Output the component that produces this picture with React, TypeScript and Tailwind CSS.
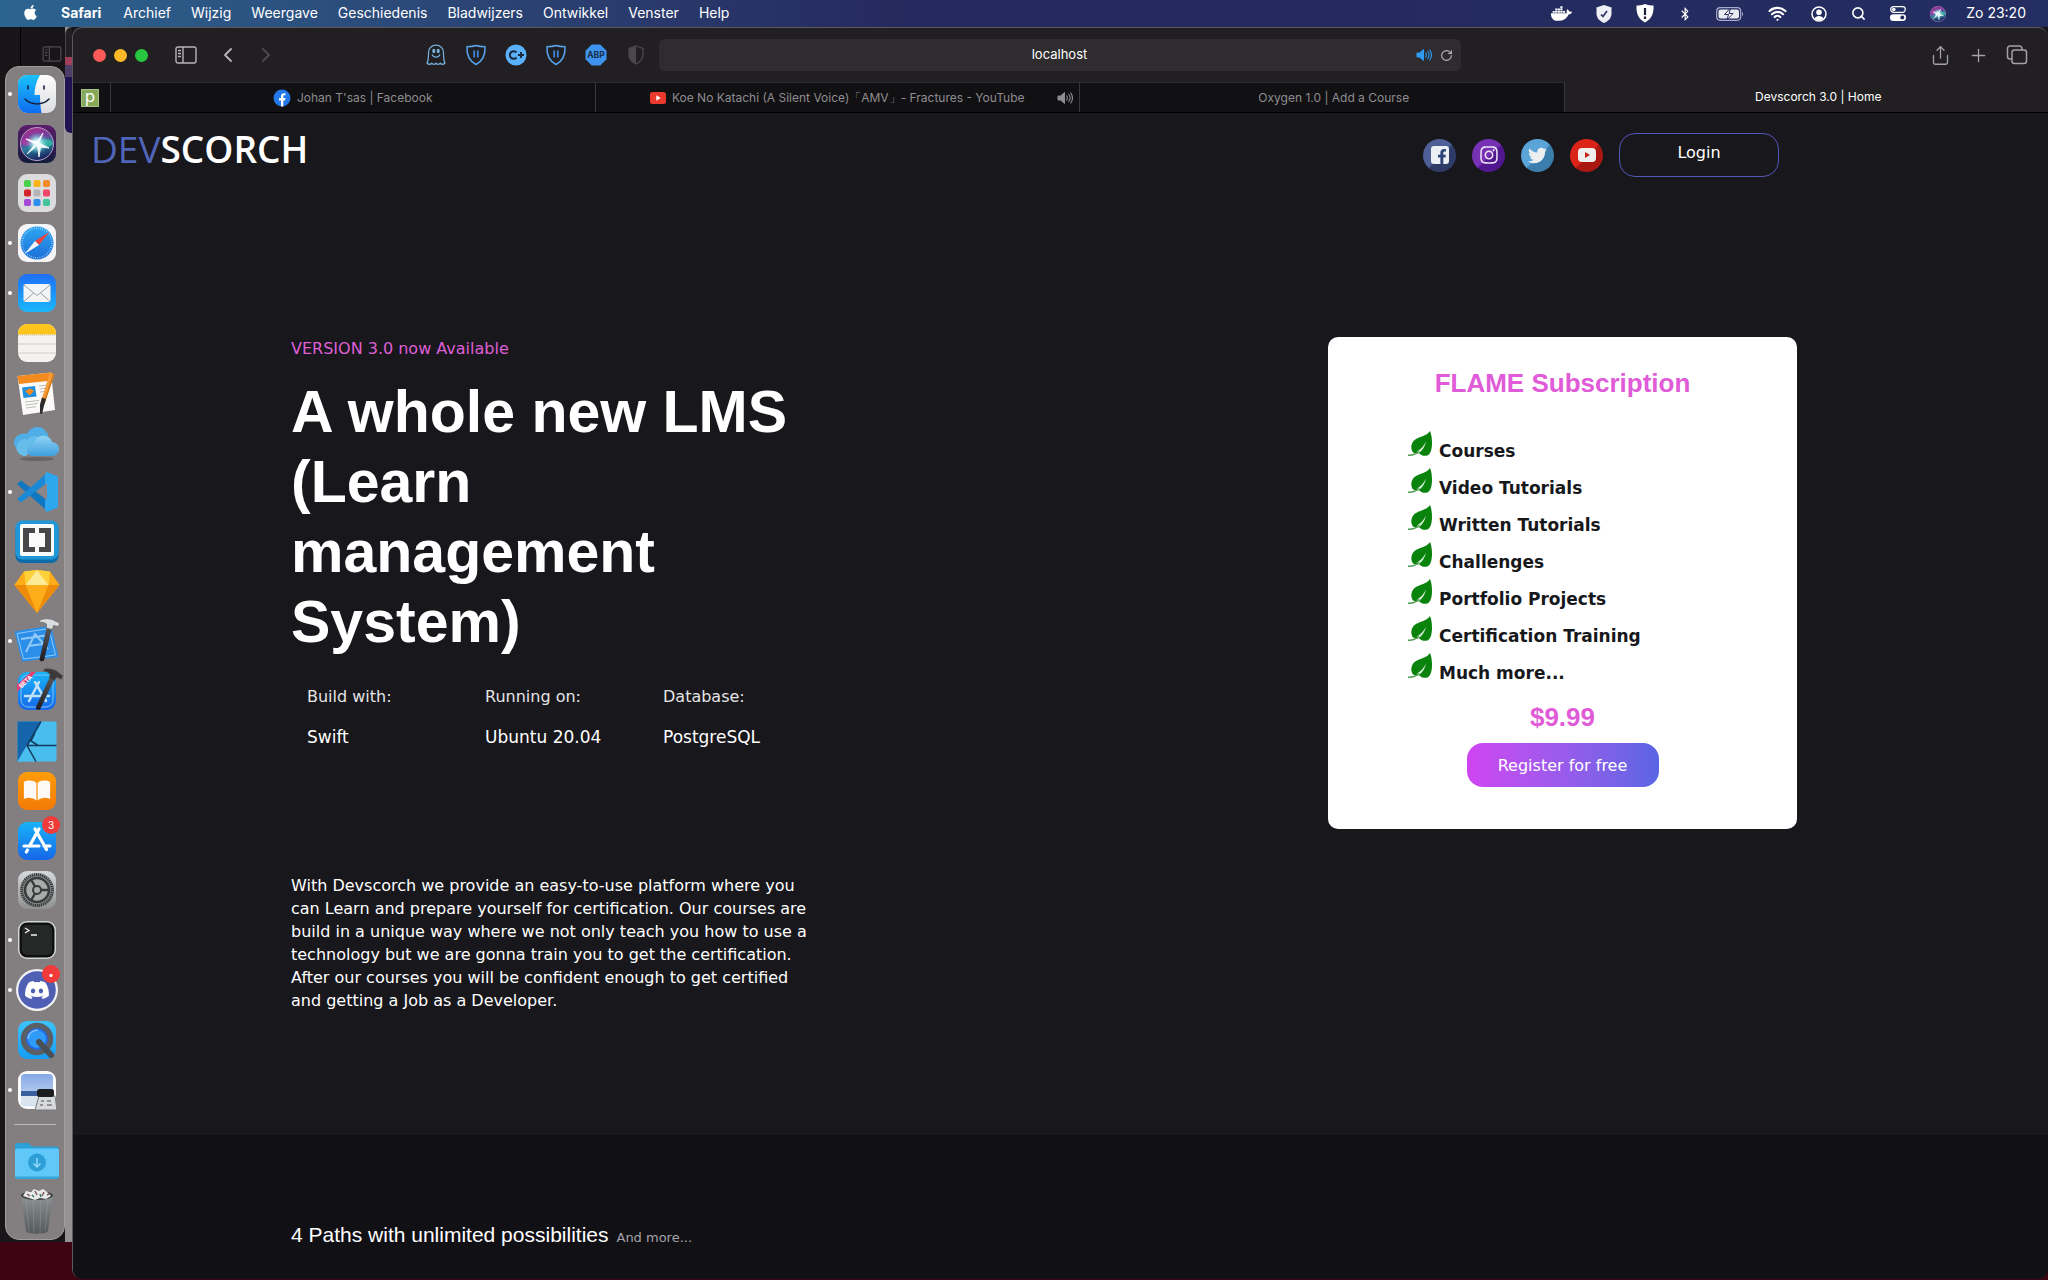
import React from "react";
import { FaApple, FaDocker, FaBluetoothB, FaFacebookF, FaTwitter, FaInstagram, FaDiscord } from "react-icons/fa";
import { Wifi, Search, ChevronLeft, ChevronRight, Plus, Share, RotateCw } from "lucide-react";

const SANS = "font-['Inter',sans-serif]";
const BODY = "font-['DejaVu_Sans',sans-serif]";
const HEAD = "font-['Liberation_Sans',sans-serif]";

/* ---------- Dock icons ---------- */

function Icon({ children }: { children: React.ReactNode }) {
  return (
    <svg viewBox="0 0 48 48" className="size-12 shrink-0 overflow-visible" aria-hidden="true">
      {children}
    </svg>
  );
}

function Gradients() {
  const defs: [string, string, string][] = [
    ["gBlue", "#19c3fb", "#0f6bf0"],
    ["gDial", "#2fa6f2", "#1b6fd8"],
    ["gMail", "#1f6ff5", "#1bb7fa"],
    ["gStore", "#17b3f8", "#1767e8"],
    ["gGrey", "#d5d9db", "#8f9190"],
    ["gOrange", "#ff9d0a", "#f47a06"],
    ["gCloud", "#8fd3f6", "#3f9fdc"],
    ["gLight", "#fdfdfd", "#dcdde0"],
    ["gSky", "#86a8e6", "#cfe0f5"],
    ["gQt", "#3ec4fb", "#149cf5"],
    ["gTrash", "#8d9395", "#54595b"],
    ["gSiri", "#5b1d6b", "#111b3c"],
    ["gHammer", "#5a5a5c", "#1c1c1e"],
  ];
  return (
    <svg className="absolute size-0" aria-hidden="true">
      <defs>
        {defs.map(([id, a, b]) => (
          <linearGradient key={id} id={id} x1="0" y1="0" x2="0" y2="1">
            <stop offset="0" stopColor={a} />
            <stop offset="1" stopColor={b} />
          </linearGradient>
        ))}
        <linearGradient id="gOrb" x1="0" y1="0" x2=".3" y2="1">
          <stop offset="0" stopColor="#b32f86" />
          <stop offset=".4" stopColor="#7a3a9c" />
          <stop offset=".65" stopColor="#2c7f9c" />
          <stop offset="1" stopColor="#1d2f66" />
        </linearGradient>
        <radialGradient id="gGlow">
          <stop offset="0" stopColor="#ffffff" />
          <stop offset=".35" stopColor="#b8f4f2" stopOpacity=".9" />
          <stop offset="1" stopColor="#4fc9d0" stopOpacity="0" />
        </radialGradient>
      </defs>
    </svg>
  );
}

const Tile = ({ fill }: { fill: string }) => <rect x="5" y="5" width="38" height="38" rx="9" fill={fill} />;

const Finder = () => (
  <Icon>
    <Tile fill="url(#gLight)" />
    <path d="M14 5h13c-4 7-5.500 13-5.500 20h5.500c0 7 .5 12 1.500 18H14a9 9 0 0 1-9-9V14a9 9 0 0 1 9-9z" fill="url(#gBlue)" />
    <path d="M15 16v3M31 16v3" stroke="#16203a" strokeWidth="1.600" strokeLinecap="round" />
    <path d="M12 29c6 6.500 18 6.500 24 0" stroke="#16203a" strokeWidth="1.500" fill="none" strokeLinecap="round" />
  </Icon>
);

const SiriOrb = () => (
  <>
    <circle cx="24" cy="24" r="16.500" fill="url(#gOrb)" stroke="#b79ac6" strokeWidth="1" />
    <path d="M24 23C16 14 9 17 8 24c5 3 11 2 16-1z" fill="#c13ba8" opacity=".6" />
    <path d="M24 23c6-5 14-5 16 1-5 5-12 4-16-1z" fill="#37c9a6" opacity=".7" />
    <circle cx="24" cy="23" r="11" fill="url(#gGlow)" />
    <path d="M24 22l-10 12 7.500-6zM24 22l2 15 1.500-10zM24 22l12 6-9-1zM24 22l6-9-3.500 8zM24 22l-11-3 8 4.500z" fill="#fff" stroke="#fff" strokeWidth="1" strokeLinejoin="round" opacity=".9" />
  </>
);

const Siri = () => (
  <Icon>
    <Tile fill="url(#gSiri)" />
    <SiriOrb />
  </Icon>
);

const Launchpad = () => {
  const colors = ["#4bd04c", "#f7b51b", "#f38b2b", "#d0252b", "#b5b5b7", "#f0486b", "#a64bd6", "#2b8ff0", "#43c59b"];
  return (
    <Icon>
      <Tile fill="#dcdbdd" />
      {colors.map((c, i) => (
        <rect key={c} x={11 + (i % 3) * 9.500} y={11 + Math.floor(i / 3) * 9.500} width="7" height="7" rx="1.800" fill={c} />
      ))}
    </Icon>
  );
};

const SafariIcon = () => (
  <Icon>
    <Tile fill="#f5f5f7" />
    <circle cx="24" cy="24" r="16.500" fill="url(#gDial)" />
    <circle cx="24" cy="24" r="14.800" fill="none" stroke="#cfe8fb" strokeWidth="1.500" strokeDasharray=".6 1.600" />
    <path d="M36.500 13L26 26 22 22z" fill="#f0433c" />
    <path d="M11.500 35L22 22l4 4z" fill="#f4f6f8" />
  </Icon>
);

const Mail = () => (
  <Icon>
    <Tile fill="url(#gMail)" />
    <rect x="10.500" y="15" width="27" height="18" rx="2" fill="#f3f4f5" />
    <path d="M11 16l11.500 9.500c1 .8 2 .8 3 0L37 16M11 32.500l9.500-8.500M37 32.500L27.500 24" fill="none" stroke="#9c9fa3" strokeWidth="1" />
  </Icon>
);

const Notes = () => (
  <Icon>
    <Tile fill="#f4f3f0" />
    <path d="M14 5h20a9 9 0 0 1 9 9v1.500H5V14a9 9 0 0 1 9-9z" fill="#fcc41d" />
    <path d="M5 16h38" stroke="#c9b98a" strokeWidth="1" strokeDasharray="1 1" />
    <path d="M5 25h38M5 34h38" stroke="#cfcec9" strokeWidth="1" />
  </Icon>
);

const Pages = () => (
  <Icon>
    <path d="M4.500 7L38 3.500 42 41 10 46z" fill="#fbfaf8" />
    <path d="M4.500 7L38 3.500l1 8L6 15z" fill="#f28a1f" />
    <path d="M9 18.500l13-1.500 1.500 10.500-13 1.500z" fill="#1f8fe0" />
    <path d="M12 22l5-2.500 4 2-4 5z" fill="#f28a1f" />
    <path d="M26 17l7-.8M26.500 20l6-.8M27 23l5-.6M12 33l14-1.500M12.500 36l12-1.500M13 39l10-1.300" stroke="#b9b9b9" strokeWidth="1" />
    <path d="M37 3.500l4.500 1.800L31.500 35l-4-1.500z" fill="#f6a03a" />
    <path d="M40 4.500l1.500.8L31.500 35l-1.500-.6z" fill="#d6791a" />
    <path d="M29 28.500l4 1.500-1.800 6-2.200 9-2-.6 0-9z" fill="#2b2b2d" />
  </Icon>
);

const Cloud = () => (
  <Icon>
    <ellipse cx="24" cy="41" rx="17" ry="2" fill="#000" opacity=".2" />
    <path d="M10 33a8.500 8.500 0 0 1-1-17c3-1 5 0 5 0C17 8 30 6 33 14c3 2 3 6 0 10z" fill="#4faee5" />
    <path d="M13 38C3 38 0 27 8 22c4-2 7 0 7 0 2-6 12-5 13 1z" fill="#66bdec" />
    <path d="M19 38c-6-1-7-11 2-12 2-11 16-10 18-2 10 1 9 14 0 14z" fill="url(#gCloud)" />
  </Icon>
);

const VsCode = () => (
  <Icon>
    <path d="M4 16l4-3.500 25 19V42z" fill="#0f76c0" />
    <path d="M4 31l4 3.500L34 15V5z" fill="#1a8ad6" />
    <path d="M34 4l11 4.500v31L34 44l-2-2V6z" fill="#2fa7ee" />
    <path d="M34 15v17l-10.500-8.500z" fill="#8b8687" />
  </Icon>
);

const Brackets = () => (
  <Icon>
    <rect x="2.500" y="4" width="43" height="41" rx="7" fill="#0f6ba8" />
    <rect x="2.500" y="2.500" width="43" height="39" rx="7" fill="#1f97d8" />
    <rect x="7" y="6" width="34" height="32" rx="2" fill="#fafafa" />
    <path d="M10 10h12v5h-6v14h6v5H10zM38 10H26v5h6v14h-6v5h12z" fill="#48484a" />
    <path d="M17 16h14v12H17z" fill="#fafafa" />
  </Icon>
);

const Sketch = () => (
  <Icon>
    <path d="M11 3.500L24 2l13 1.500L46.500 17 24 45 1.500 17z" fill="#fdad1a" />
    <path d="M11 3.500L24 2 12.500 17z" fill="#fdd13a" />
    <path d="M37 3.500L24 2l11.500 15z" fill="#fdd13a" />
    <path d="M24 2l11.500 15h-23z" fill="#fdea96" />
    <path d="M1.500 17h11L24 45z" fill="#ee8b0b" />
    <path d="M46.500 17h-11L24 45z" fill="#ee8b0b" />
    <path d="M1.500 17L11 3.500 12.500 17z" fill="#fdad1a" />
  </Icon>
);

const Hammer = ({ head }: { head: string }) => (
  <g>
    <path d="M34 9l5 1.500L31 43.500c-2 1.500-4 .8-4.500-1z" fill="url(#gHammer)" />
    <path d="M27 3c5-2 12-1.500 15 1l4.500 2-1 3.500-5-1-1.500 4-5.500-1.500 0-4c-3-2-5-2-7-1.500z" fill={head} stroke="#555" strokeWidth=".5" />
  </g>
);

const Xcode = () => (
  <Icon>
    <path d="M1.500 14.500L38 8.500 45.500 40 9 44.500z" fill="#2b8ee8" />
    <path d="M4 16.500l32-5 6.500 26.500-32 4z" fill="none" stroke="#8cc8f8" strokeWidth="1" />
    <path d="M13 35l9-18 13 15M15 29l15-2M8 22l28-4" stroke="#a9d8fb" strokeWidth="2" fill="none" opacity=".8" />
    <Hammer head="#d9dcde" />
  </Icon>
);

const XcodeBeta = () => (
  <Icon>
    <Tile fill="url(#gStore)" />
    <rect x="8" y="8" width="32" height="32" rx="7" fill="none" stroke="#7cc2f8" strokeWidth="1" />
    <path d="M16 34l10-19M22 15l11 19M12 29h24" stroke="#bfe2fb" strokeWidth="2.500" fill="none" strokeLinecap="round" />
    <path d="M4 18L18 5h5L4 25z" fill="#e83f6f" />
    <text x="13" y="16.500" fontSize="6" fontWeight="700" fill="#fff" textAnchor="middle" fontFamily="Inter, sans-serif" transform="rotate(-45 13 15)">
      BETA
    </text>
    <g transform="rotate(12 34 24)">
      <Hammer head="#3a3a3c" />
    </g>
  </Icon>
);

const Affinity = () => (
  <Icon>
    <rect x="4.500" y="4.500" width="39" height="40" rx="1" fill="#49bdee" />
    <path d="M4.500 4.500H28L4.500 44.500z" fill="#1565ad" />
    <path d="M28 4.500L4.500 44.500V44.500H22L14 28.500z" fill="#49bdee" />
    <path d="M28 4.500L14 28.500l9 16M14 28.500h29.500M22 16l-4 8 7 4.500" stroke="#123a5e" strokeWidth="1.500" fill="none" />
  </Icon>
);

const Books = () => (
  <Icon>
    <Tile fill="url(#gOrange)" />
    <path d="M23.400 16c-3-3-9-3-12.500-1v17c4-2 9-1.500 12.500 1.500zM24.600 16c3-3 9-3 12.500-1v17c-4-2-9-1.500-12.500 1.500z" fill="#fdf9f4" />
  </Icon>
);

const AppStore = () => (
  <Icon>
    <Tile fill="url(#gStore)" />
    <path d="M26 12L16.500 29M22 12l11.500 20.500M11 29h15M31 29h6M14.500 33l-1.200 2" stroke="#fff" strokeWidth="3.200" strokeLinecap="round" fill="none" />
  </Icon>
);

const Settings = () => (
  <Icon>
    <Tile fill="url(#gGrey)" />
    <circle cx="24" cy="24" r="15.500" fill="#8c8e8e" stroke="#3d3e40" strokeWidth="3" strokeDasharray="1.500 .6" />
    <circle cx="24" cy="24" r="12" fill="#a9abab" stroke="#3a3b3d" strokeWidth="2.500" />
    <circle cx="24" cy="24" r="4" fill="none" stroke="#3a3b3d" strokeWidth="2" />
    <path d="M28 24h8M22 20.500l-4-7M22 27.500l-4 7" stroke="#3a3b3d" strokeWidth="2.500" />
  </Icon>
);

const Terminal = () => (
  <Icon>
    <Tile fill="#d3d6d6" />
    <rect x="6.500" y="6.500" width="35" height="35" rx="7.500" fill="#0f1010" />
    <rect x="9" y="9" width="30" height="30" rx="5" fill="#262727" />
    <path d="M12 12l4 2.500-4 2.500M18 19h6" stroke="#eee" strokeWidth="1.300" fill="none" />
  </Icon>
);

const Discord = () => (
  <Icon>
    <circle cx="24" cy="24" r="21" fill="#f3f3f6" />
    <circle cx="24" cy="24" r="18.800" fill="#4f60b4" />
    <FaDiscord x="11" y="11" size={26} color="#fff" />
  </Icon>
);

const QuickTime = () => (
  <Icon>
    <Tile fill="url(#gQt)" />
    <circle cx="24" cy="23" r="13.500" fill="#1e6bf0" stroke="#5a5f66" strokeWidth="5.500" />
    <circle cx="24" cy="23" r="9" fill="#2e9bf8" />
    <path d="M26 26l12 13" stroke="#4b5057" strokeWidth="6" strokeLinecap="round" />
    <path d="M15 23c0-6 5-9 10-9" stroke="#bfe4fd" strokeWidth="1.500" fill="none" opacity=".6" />
  </Icon>
);

const Preview = () => (
  <Icon>
    <Tile fill="#fafafa" />
    <rect x="8" y="8" width="32" height="32" rx="4" fill="url(#gSky)" />
    <path d="M8 25h32v5H8z" fill="#39609c" />
    <path d="M8 30h32v5a4 4 0 0 1-4 4H12a4 4 0 0 1-4-4z" fill="#d9e4ee" />
    <path d="M26 30h16l2 14H22z" fill="#d8d9da" stroke="#77797b" strokeWidth="1" />
    <rect x="24" y="23" width="17" height="8" rx="2.500" fill="#1c1d1f" />
    <path d="M28 35h3M34 35h4M27 39h3M34 39h5" stroke="#4b4d4f" strokeWidth="1" />
  </Icon>
);

const Downloads = () => (
  <Icon>
    <path d="M2 8c0-2 1-3 3-3h10c2 0 2.500 3.500 5 3.500h23c2 0 3 1 3 3V20H2z" fill="#2da0d8" />
    <rect x="2" y="10.500" width="44" height="30" rx="2.500" fill="#5fc8f8" />
    <path d="M2 38.500h44a2.500 2.500 0 0 1-2.500 2.500h-39A2.500 2.500 0 0 1 2 38.500z" fill="#35a5db" />
    <circle cx="24" cy="24.500" r="9" fill="#2d9ed6" />
    <path d="M24 20v9M20.500 25.500L24 29l3.500-3.500" stroke="#8fdcfc" strokeWidth="1.500" fill="none" />
  </Icon>
);

const Trash = () => (
  <Icon>
    <path d="M8 7h32l-5 36c-1 3.500-21 3.500-22 0z" fill="url(#gTrash)" />
    <path d="M13 11l3 32M20 12l1 33M28 12l-1 33M35 11l-3 32" stroke="#a9aeb0" strokeWidth=".8" opacity=".4" />
    <ellipse cx="24" cy="7.500" rx="16" ry="4.500" fill="#3e4243" />
    <path d="M10 8l3-5 5 1 3-3 5 2 4-2 4 3 4 4-5 3-6-1-5 2-6-2z" fill="#e9e9ea" />
    <path d="M14 6l3 2M22 3l2 4M31 4l-2 4M34 7l2-1" stroke="#7a5550" strokeWidth="1.500" />
    <path d="M19 7l2 2M27 6l1 3" stroke="#367b68" strokeWidth="1.500" />
  </Icon>
);

type DockEntry = { name: string; icon: React.ReactNode; open?: boolean; badge?: string };

const dockApps: DockEntry[] = [
  { name: "Finder", icon: <Finder />, open: true },
  { name: "Siri", icon: <Siri /> },
  { name: "Launchpad", icon: <Launchpad /> },
  { name: "Safari", icon: <SafariIcon />, open: true },
  { name: "Mail", icon: <Mail />, open: true },
  { name: "Notes", icon: <Notes /> },
  { name: "Pages", icon: <Pages /> },
  { name: "Cloud", icon: <Cloud /> },
  { name: "Visual Studio Code", icon: <VsCode />, open: true },
  { name: "Brackets", icon: <Brackets /> },
  { name: "Sketch", icon: <Sketch /> },
  { name: "Xcode", icon: <Xcode />, open: true },
  { name: "Xcode beta", icon: <XcodeBeta /> },
  { name: "Affinity Designer", icon: <Affinity /> },
  { name: "Books", icon: <Books /> },
  { name: "App Store", icon: <AppStore />, badge: "3" },
  { name: "System Preferences", icon: <Settings /> },
  { name: "Terminal", icon: <Terminal />, open: true },
  { name: "Discord", icon: <Discord />, open: true, badge: "•" },
  { name: "QuickTime Player", icon: <QuickTime /> },
  { name: "Preview", icon: <Preview />, open: true },
];

const dockPlaces: DockEntry[] = [
  { name: "Downloads", icon: <Downloads /> },
  { name: "Trash", icon: <Trash /> },
];

function DockItem({ name, icon, open, badge }: DockEntry) {
  return (
    <button type="button" aria-label={name} className="relative flex min-h-0 flex-1 items-center gap-px pl-0.5">
      <span className={open ? "size-1 rounded-full bg-white" : "size-1"} />
      {icon}
      {badge && (
        <span className="absolute top-0 right-1 flex size-[18px] items-center justify-center rounded-full bg-[#f03b3a] text-[10px] leading-none text-white">
          {badge}
        </span>
      )}
    </button>
  );
}

function Dock() {
  return (
    <nav
      aria-label="Dock"
      className="relative mt-[39px] mb-10 ml-[5px] flex w-[60px] flex-1 flex-col rounded-[14px] border border-[#a19d9e] bg-[#837e80] py-0.5"
    >
      {dockApps.map((a) => (
        <DockItem key={a.name} {...a} />
      ))}
      <div className="mx-2 mt-2.5 mb-3 h-px shrink-0 bg-[#bab6b7]" />
      {dockPlaces.map((a) => (
        <DockItem key={a.name} {...a} />
      ))}
    </nav>
  );
}

/* ---------- Small glyphs ---------- */

const SidebarGlyph = ({ className }: { className: string }) => (
  <svg viewBox="0 0 22 18" className={className} fill="none" stroke="currentColor" strokeWidth="1.400" aria-hidden="true">
    <rect x="1" y="1" width="20" height="16" rx="2" />
    <path d="M8 1v16M3 4.500h3M3 7.500h3M3 10.500h3" />
  </svg>
);

const SpeakerGlyph = ({ className }: { className: string }) => (
  <svg viewBox="0 0 16 14" className={className} fill="none" stroke="currentColor" aria-hidden="true">
    <path d="M1 5h2.500L7.500 1.500v11L3.500 9H1z" fill="currentColor" />
    <path d="M9.500 4.500c1 1.500 1 3.500 0 5M11.500 3c2 2.500 2 5.500 0 8M13.500 1.500c2.500 3.500 2.500 7.500 0 11" strokeWidth="1.100" />
  </svg>
);

const ShieldGlyph = () => (
  <svg viewBox="0 0 22 22" className="size-[22px]" fill="none" aria-hidden="true">
    <path d="M11 1.500c3 1 6 1.200 9 1.200.5 8-2 14-9 17.800C4 16.700 1.500 10.700 2 2.700c3 0 6-.2 9-1.200z" stroke="#5aa3ee" strokeWidth="1.500" />
    <path d="M9.200 6.500v7M12.800 6.500v7" stroke="#3f86d8" strokeWidth="1.800" />
  </svg>
);

const GhostGlyph = () => (
  <svg viewBox="0 0 22 22" className="size-[22px]" fill="none" stroke="#74add9" strokeWidth="1.300" aria-hidden="true">
    <path d="M2 19c1.500-2 1.500-7 1.500-10.500C3.500 4 6.800 1.200 11 1.200s7.500 2.800 7.500 7.300c0 3.500 0 8.500 1.500 10.500-1.500 1.500-3.500 1.500-4.800.2-1.200 1.600-2.800 1.600-4.200 0-1.400 1.600-3 1.600-4.200 0C5.500 20.500 3.500 20.500 2 19z" />
    <ellipse cx="8.800" cy="7" rx=".9" ry="1.600" fill="#9ccbf0" />
    <ellipse cx="13.200" cy="7" rx=".9" ry="1.600" fill="#9ccbf0" />
    <path d="M7 10.500c1.500 3.500 6.500 3.500 8 0" />
  </svg>
);

const CPlusGlyph = () => (
  <svg viewBox="0 0 22 22" className="size-[22px]" aria-hidden="true">
    <circle cx="11" cy="11" r="10.500" fill="#5ab1fb" />
    <path d="M11.500 8.500a3.800 3.800 0 1 0 0 5M13 11h6M16 8v6" stroke="#1b2a3d" strokeWidth="2" fill="none" />
  </svg>
);

const AbpGlyph = () => (
  <svg viewBox="0 0 22 22" className="size-[22px]" aria-hidden="true">
    <path d="M6.700.5h8.600l6.200 6.200v8.600l-6.200 6.200H6.700L.5 15.300V6.700z" fill="#3d93ee" />
    <text x="11" y="14" fontSize="8.500" fontWeight="700" textAnchor="middle" fill="#1c2b42" fontFamily="Inter, sans-serif">
      ABP
    </text>
  </svg>
);

const HalfShieldGlyph = () => (
  <svg viewBox="0 0 22 22" className="size-[22px]" aria-hidden="true">
    <path d="M11 2l7 2.500v6c0 4.500-3 7.500-7 9.500-4-2-7-5-7-9.500v-6z" fill="none" stroke="#4a484b" strokeWidth="1.300" />
    <path d="M11 2v18c-4-2-7-5-7-9.500v-6z" fill="#4a484b" />
  </svg>
);

/* ---------- Menu bar ---------- */

const menus = ["Archief", "Wijzig", "Weergave", "Geschiedenis", "Bladwijzers", "Ontwikkel", "Venster", "Help"];

function MenuBar() {
  return (
    <header
      className={`${SANS} flex h-[27px] shrink-0 items-center justify-between bg-linear-to-r from-[#2c6490] via-[#25285c] via-45% to-[#232d61] px-[22px] text-[14px] leading-5 text-white`}
    >
      <nav aria-label="Menu" className="flex items-center gap-5 pb-0.5">
        <button type="button" aria-label="Apple" className="pr-0.5">
          <FaApple size={17} />
        </button>
        <button type="button" className="pr-0.5 font-bold">
          Safari
        </button>
        {menus.map((m) => (
          <button type="button" key={m}>
            {m}
          </button>
        ))}
      </nav>
      <div className="flex items-center gap-5">
        <div className="flex items-center gap-6">
          <FaDocker size={21} />
          <svg viewBox="0 0 16 18" className="h-[18px] w-4" aria-hidden="true">
            <path d="M8 0l7.500 2.500v6c0 4.500-3 7.500-7.500 9.500C3.500 16 .5 13 .5 8.500v-6z" fill="#eef0f6" />
            <path d="M5 9.500l2 2L11 6" stroke="#2a2d60" strokeWidth="1.600" fill="none" />
          </svg>
          <svg viewBox="0 0 18 19" className="h-[19px] w-[18px]" aria-hidden="true">
            <path d="M9 0c3 1 6 1.500 8.500 1.500.5 8-2 13.500-8.500 17C2.500 15 0 9.500.5 1.500 3 1.500 6 1 9 0z" fill="#fff" />
            <path d="M9 4v7M9 12.500v2.500" stroke="#1c1e3c" strokeWidth="2.200" />
          </svg>
          <FaBluetoothB size={14} />
          <svg viewBox="0 0 28 14" className="h-3.5 w-7" aria-hidden="true">
            <rect x=".7" y=".7" width="24" height="12.600" rx="3.500" fill="none" stroke="#a9abc8" strokeWidth="1.200" />
            <rect x="2.500" y="2.500" width="20.500" height="9" rx="2" fill="#e9eaf2" />
            <path d="M14.500 1L8.500 7.500h4L11 13l6-6.500h-4z" fill="#fff" stroke="#262a5e" strokeWidth="1" />
            <path d="M26 5v4c1.500-.5 1.500-3.500 0-4z" fill="#a9abc8" />
          </svg>
          <Wifi size={19} strokeWidth={2.800} />
          <svg viewBox="0 0 16 16" className="size-4" aria-hidden="true">
            <circle cx="8" cy="8" r="7" fill="none" stroke="#fff" strokeWidth="1.500" />
            <circle cx="8" cy="6.300" r="2.800" fill="#fff" />
            <path d="M3.500 12.500c1-3.500 8-3.500 9 0-2 2.300-7 2.300-9 0z" fill="#fff" />
          </svg>
          <Search size={15} strokeWidth={2.500} />
          <svg viewBox="0 0 16 15" className="h-[15px] w-4" aria-hidden="true">
            <rect x=".7" y=".7" width="14.600" height="5.600" rx="2.800" fill="none" stroke="#fff" strokeWidth="1.200" />
            <circle cx="3.800" cy="3.500" r="1.800" fill="#fff" />
            <rect x="0" y="8.300" width="16" height="6.700" rx="3.300" fill="#fff" />
            <circle cx="12.300" cy="11.600" r="2" fill="#262a5e" />
          </svg>
          <svg viewBox="7 7 34 34" className="size-4" aria-hidden="true">
            <SiriOrb />
          </svg>
        </div>
        <time className="pb-0.5">Zo 23:20</time>
      </div>
    </header>
  );
}

/* ---------- Safari chrome ---------- */

function Toolbar() {
  return (
    <div className="grid h-[54px] shrink-0 grid-cols-[586px_minmax(0,802px)_1fr] items-center text-[#b7b5b8]">
      <div className="flex items-center">
        <div className="flex gap-2 pl-5">
          <button type="button" aria-label="Close" className="size-[13px] rounded-full bg-[#fc5b57]" />
          <button type="button" aria-label="Minimize" className="size-[13px] rounded-full bg-[#fcb827]" />
          <button type="button" aria-label="Zoom window" className="size-[13px] rounded-full bg-[#28c63f]" />
        </div>
        <button type="button" aria-label="Sidebar" className="ml-[27px]">
          <SidebarGlyph className="h-[18px] w-[22px]" />
        </button>
        <button type="button" aria-label="Back" className="ml-[19px]">
          <ChevronLeft size={24} strokeWidth={1.800} />
        </button>
        <button type="button" aria-label="Forward" className="ml-3.5 text-[#4c4a4d]">
          <ChevronRight size={24} strokeWidth={1.800} />
        </button>
        <div className="ml-auto flex gap-[18px] pr-3">
          <GhostGlyph />
          <ShieldGlyph />
          <CPlusGlyph />
          <ShieldGlyph />
          <AbpGlyph />
          <HalfShieldGlyph />
        </div>
      </div>
      <div className="flex h-8 items-center rounded-md bg-[#2e2c2f] pr-2">
        <input
          aria-label="Address"
          defaultValue="localhost"
          className="min-w-0 flex-1 bg-transparent pl-11 text-center text-[13px] text-white outline-none"
        />
        <SpeakerGlyph className="mr-2 h-3.5 w-4 text-[#2f9bf2]" />
        <button type="button" aria-label="Reload">
          <RotateCw size={13} strokeWidth={2} />
        </button>
      </div>
      <div className="flex items-center justify-end gap-[17px] pr-5 text-[#a3a1a4]">
        <button type="button" aria-label="Share">
          <Share size={21} strokeWidth={1.500} />
        </button>
        <button type="button" aria-label="New tab">
          <Plus size={21} strokeWidth={1.500} />
        </button>
        <button type="button" aria-label="Tab overview">
          <svg viewBox="0 0 22 20" className="h-5 w-[22px]" fill="none" stroke="currentColor" strokeWidth="1.500" aria-hidden="true">
            <path d="M6 14H4a2.500 2.500 0 0 1-2.500-2.500v-8A2.500 2.500 0 0 1 4 1h9.500A2.500 2.500 0 0 1 16 3.500V5" />
            <rect x="6" y="5" width="14.500" height="13.500" rx="2.500" />
          </svg>
        </button>
      </div>
    </div>
  );
}

function TabBar() {
  const tab =
    "relative flex h-[30px] min-w-0 flex-1 items-center justify-center gap-1.5 border-t border-l border-t-[#2c2a2d] border-l-[#3a383b] bg-[#111013] text-[12px] text-[#8f8d90]";
  return (
    <div role="tablist" className="flex shrink-0 border-b border-black">
      <button type="button" role="tab" aria-label="Pinned tab" className="flex w-[37px] items-center border-t border-[#2c2a2d] bg-[#111013] pl-2">
        <span className="flex size-[18px] items-center justify-center border border-[#a9c184] bg-[#86a85a] pb-1 font-['Open_Sans',sans-serif] text-[17px] leading-none text-white">
          p
        </span>
      </button>
      <button type="button" role="tab" className={tab}>
        <svg viewBox="0 0 18 18" className="size-[18px]" aria-hidden="true">
          <circle cx="9" cy="9" r="8.500" fill="#2379ea" />
          <path d="M8 17.500V11.500H6V9h2V7.300C8 5.200 9.200 4.200 11 4.200l1.500.1v2h-1c-.9 0-1.200.5-1.200 1.200V9h2.200l-.4 2.500h-1.800v6z" fill="#fff" />
        </svg>
        Johan T&apos;sas | Facebook
      </button>
      <button type="button" role="tab" className={tab}>
        <svg viewBox="0 0 16 12" className="h-3 w-4" aria-hidden="true">
          <rect width="16" height="12" rx="2.500" fill="#ea3a2d" />
          <path d="M6.300 3.300l4.500 2.700-4.500 2.700z" fill="#fff" />
        </svg>
        <span className="truncate">Koe No Katachi (A Silent Voice)「AMV」- Fractures - YouTube</span>
        <span className="absolute right-1.5">
          <SpeakerGlyph className="h-3.5 w-4" />
        </span>
      </button>
      <button type="button" role="tab" className={tab}>
        <span className="pl-6">Oxygen 1.0 | Add a Course</span>
      </button>
      <button
        type="button"
        role="tab"
        aria-selected="true"
        className="flex h-[30px] min-w-0 flex-1 items-center justify-center border-l border-[#3a383b] text-[12px] text-white"
      >
        <span className="pl-6">Devscorch 3.0 | Home</span>
      </button>
    </div>
  );
}

/* ---------- Web page ---------- */

const YouTubeMark = () => (
  <svg viewBox="0 0 18 14" className="h-3.5 w-[18px]" aria-hidden="true">
    <rect width="18" height="14" rx="4" fill="#eeeeec" />
    <path d="M7 4l5 3-5 3z" fill="#c4201a" />
  </svg>
);

const FacebookMark = () => (
  <span className="flex size-[18px] items-end justify-center rounded-[3px] bg-[#eceff4] pl-1">
    <FaFacebookF size={15} color="#2f4478" />
  </span>
);

const socials = [
  { name: "Facebook", bg: "bg-linear-to-br from-[#4d5f96] from-50% to-[#2d3b66] to-55%", icon: <FacebookMark /> },
  { name: "Instagram", bg: "bg-linear-to-br from-[#7631b4] from-50% to-[#521690] to-55%", icon: <FaInstagram size={20} color="#ece3f5" /> },
  { name: "Twitter", bg: "bg-linear-to-br from-[#5ba4d8] from-50% to-[#3b7eae] to-55%", icon: <FaTwitter size={19} color="#eceff0" /> },
  { name: "YouTube", bg: "bg-linear-to-br from-[#dc2318] from-50% to-[#a81710] to-55%", icon: <YouTubeMark /> },
];

function PageHeader() {
  return (
    <div className="flex items-start justify-between pr-[269px] pl-[18px]">
      <a href="#home" className="mt-2 font-['Open_Sans',sans-serif] text-[37px] leading-14 font-semibold text-white">
        <span className="font-normal text-[#5065b8]">DEV</span>SCORCH
      </a>
      <div className="mt-5 flex items-center gap-4">
        {socials.map((s) => (
          <a key={s.name} href={`#${s.name.toLowerCase()}`} aria-label={s.name} className={`flex size-[33px] items-center justify-center rounded-full ${s.bg}`}>
            {s.icon}
          </a>
        ))}
        <button type="button" className={`${BODY} h-11 w-40 rounded-2xl border border-[#5456b8] pb-1 text-[16px] text-white`}>
          Login
        </button>
      </div>
    </div>
  );
}

const stack = [
  { label: "Build with:", value: "Swift" },
  { label: "Running on:", value: "Ubuntu 20.04" },
  { label: "Database:", value: "PostgreSQL" },
];

const features = ["Courses", "Video Tutorials", "Written Tutorials", "Challenges", "Portfolio Projects", "Certification Training", "Much more..."];

const Leaf = () => (
  <svg viewBox="0 0 24 25" className="h-[25px] w-6 shrink-0" aria-hidden="true">
    <path d="M22 0c1.300 3 2 7 2 12 0 7-2 12-5 12.600-3 .6-6-.3-8-2.400-2 .5-4 .3-5.500-.5C2.500 19 2.500 13 6 9.500 11 5 18.500 5.500 22 0z" fill="#0a830d" />
    <path d="M9 20.500c4-2.500 7-5.500 9-10-1 5-3.500 9-7.500 11.800z" fill="#d9efd9" />
    <path d="M0 24.200c4 .3 8-1.200 11-4" stroke="#4f9a50" strokeWidth="1.500" fill="none" />
  </svg>
);

function Hero() {
  return (
    <main className={`${BODY} flex items-start justify-between pt-40 pr-[251px] pb-[123px] pl-[218px] text-[16px] leading-6 text-white`}>
      <div className="w-[525px]">
        <p className="text-[#df5fd6]">VERSION 3.0 now Available</p>
        <h1 className={`${HEAD} mt-4 text-[59px] leading-[70px] font-bold`}>A whole new LMS (Learn management System)</h1>
        <dl className="mt-7 grid grid-cols-[178px_178px_1fr] pl-4">
          {stack.map((s) => (
            <div key={s.label} className="flex flex-col gap-4">
              <dt className="text-[#e4e4e6]">{s.label}</dt>
              <dd className="text-[17px]">{s.value}</dd>
            </div>
          ))}
        </dl>
        <p className="mt-[125px] leading-[23px]">
          With Devscorch we provide an easy-to-use platform where you can Learn and prepare yourself for certification. Our courses are build
          in a unique way where we not only teach you how to use a technology but we are gonna train you to get the certification. After our
          courses you will be confident enough to get certified and getting a Job as a Developer.
        </p>
      </div>
      <section className="flex w-[469px] flex-col items-center rounded-[10px] bg-white pt-7 pb-[42px]">
        <h2 className={`${HEAD} text-[26px] leading-9 font-bold text-[#e05bd7]`}>FLAME Subscription</h2>
        <ul className="mt-[26px] w-full pl-20 text-[17px] text-[#17181b]">
          {features.map((f) => (
            <li key={f} className="flex h-[37px] items-start gap-[7px] pt-1 font-bold">
              <Leaf />
              <span className="pt-2">{f}</span>
            </li>
          ))}
        </ul>
        <p className={`${HEAD} mt-[13px] text-[26px] leading-9 font-bold text-[#e05bd7]`}>$9.99</p>
        <button type="button" className="mt-2 h-11 w-48 rounded-2xl bg-linear-to-r from-[#cf44f2] to-[#5865e4] pt-0.5 text-white">
          Register for free
        </button>
      </section>
    </main>
  );
}

function Paths() {
  return (
    <section className="flex-1 bg-[#111015] pt-[84px] pl-[218px]">
      <div className="flex items-baseline gap-2">
        <h2 className={`${HEAD} text-[21px] leading-8 text-white`}>4 Paths with unlimited possibilities</h2>
        <span className={`${BODY} text-[13px] text-[#a5a4a8]`}>And more...</span>
      </div>
    </section>
  );
}

/* ---------- Desktop ---------- */

function BackWindow() {
  return (
    <div aria-hidden="true" className="absolute inset-x-0 top-0 bottom-[38px] overflow-hidden bg-[#181518]">
      <div className="absolute top-0 left-5 h-10 w-px bg-black" />
      <SidebarGlyph className="absolute top-[19px] left-[42px] h-4 w-5 text-[#4e4b4e]" />
      <div className="absolute top-0 right-0 h-full w-[7px] bg-[#969293]">
        <div className="h-[30px] rounded-tl-lg border-l border-[#454345] bg-[#211f22]" />
        <div className="h-2 bg-[#a03f5c]" />
        <div className="h-3 bg-[#4d3e68]" />
        <div className="h-14 rounded-bl-md bg-[#1f1353]" />
      </div>
    </div>
  );
}

export default function App() {
  return (
    <div className="flex min-h-screen flex-col bg-[#3c0511]">
      <Gradients />
      <MenuBar />
      <div className={`${SANS} flex flex-1 bg-linear-to-b from-[#181518] from-50% to-[#3c0511] to-95%`}>
        <div className="relative flex w-[72px] shrink-0 flex-col">
          <BackWindow />
          <Dock />
        </div>
        <div className="mb-px flex min-w-0 flex-1 flex-col overflow-hidden rounded-[10px] border-t border-l border-[#5b595c] bg-[#211f22]">
          <Toolbar />
          <TabBar />
          <div className="flex flex-1 flex-col bg-[#18171c]">
            <PageHeader />
            <Hero />
            <Paths />
          </div>
        </div>
      </div>
    </div>
  );
}
